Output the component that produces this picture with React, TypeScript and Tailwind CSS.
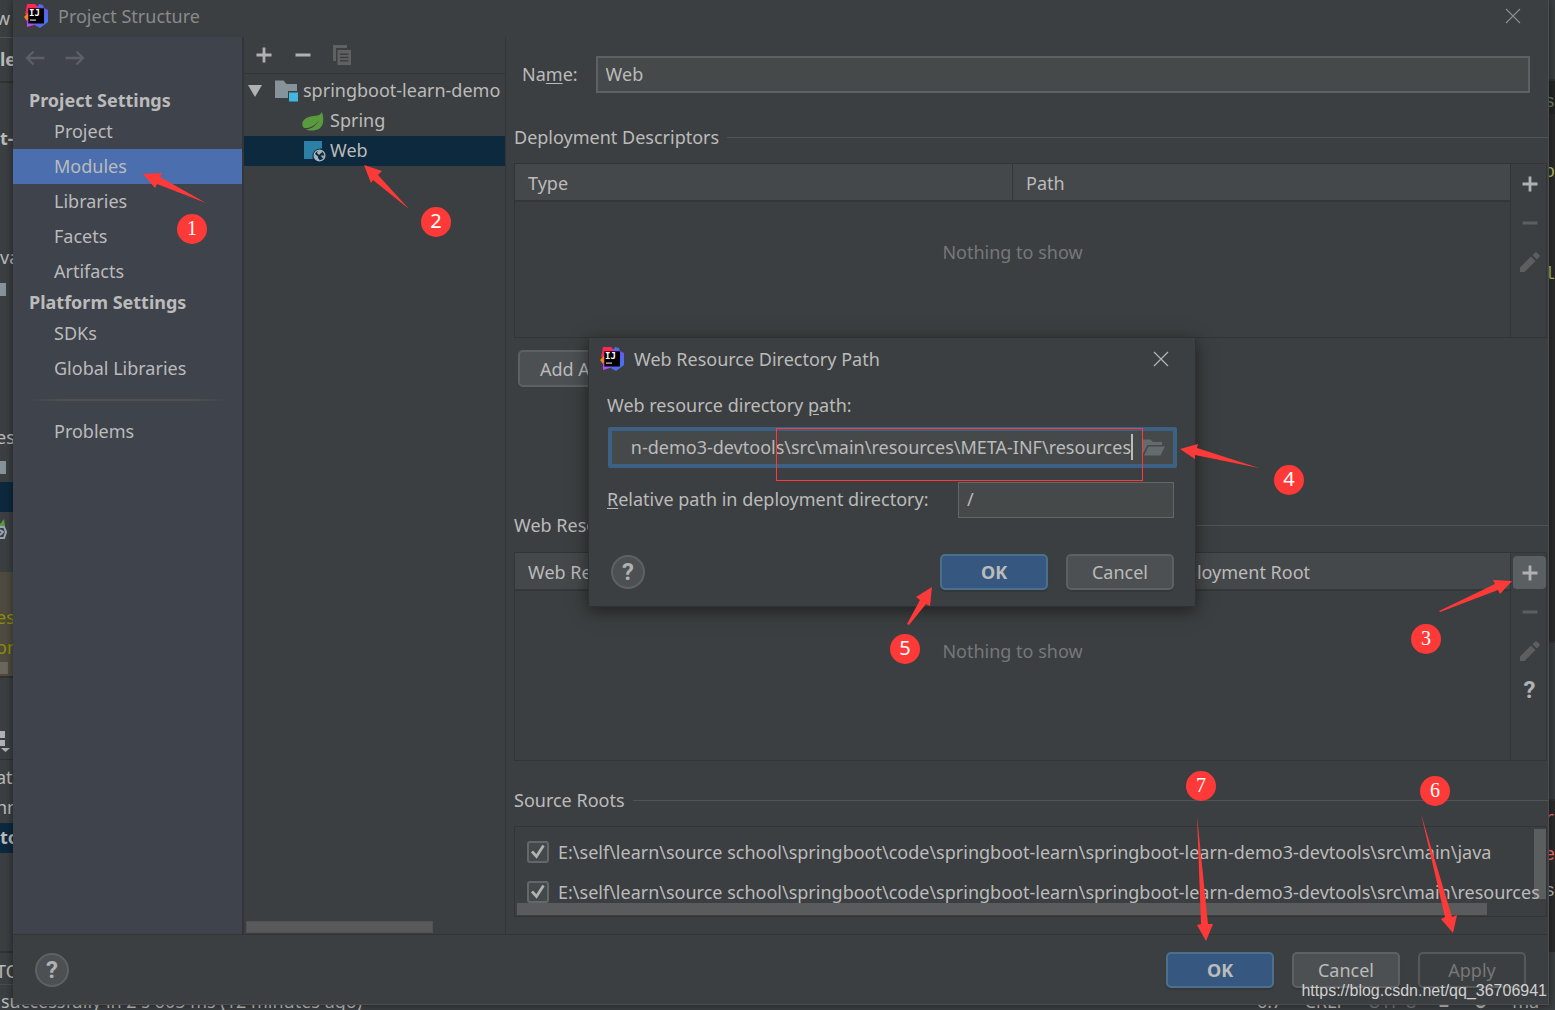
import { useId, useState } from 'react';
import type { ReactNode } from 'react';
import clsx from 'clsx';

const projectItems = ['Project', 'Modules', 'Libraries', 'Facets', 'Artifacts'];
const platformItems = ['SDKs', 'Global Libraries'];

const rootBase = 'E:\\self\\learn\\source school\\springboot\\code\\springboot-learn\\springboot-learn-demo3-devtools\\src\\main\\';

const steps = [
  { n: 1, serif: true, pos: 'left-[177px] top-[214px]' },
  { n: 2, serif: false, pos: 'left-[421px] top-[207px]' },
  { n: 3, serif: true, pos: 'left-[1411px] top-[624px]' },
  { n: 4, serif: false, pos: 'left-[1274px] top-[465px]' },
  { n: 5, serif: false, pos: 'left-[890px] top-[634px]' },
  { n: 6, serif: true, pos: 'left-[1420px] top-[776px]' },
  { n: 7, serif: true, pos: 'left-[1186px] top-[771px]' },
];

const arrows = [
  '143,174 162,173 160,177 206,203 157,184 155,188',
  '364,165 382,171 378,175 409,209 373,180 371,183',
  '1512,581 1493,580 1495,584 1439,611 1440,612 1498,590 1500,594',
  '1180,449 1198,444 1197,448 1259,468 1195,455 1195,459',
  '932,587 916,597 920,600 907,624 909,625 926,604 930,606',
  '1453,933 1441,919 1445,917 1421,814 1452,917 1457,915',
  '1206,941 1197,925 1201,924 1197,816 1208,924 1213,924',
];

function IdeaLogo() {
  const id = useId();
  return (
    <svg viewBox="0 0 24 24" className="size-6 shrink-0" aria-hidden="true">
      <defs>
        <linearGradient id={id} x1="0" y1="0" x2="1" y2="1">
          <stop offset="0" stopColor="#3a7cf0" />
          <stop offset="0.5" stopColor="#6b57e8" />
          <stop offset="1" stopColor="#2787f5" />
        </linearGradient>
      </defs>
      <path d="M3 0 H11 L15 4 L8 14 L1 10 L2 6Z" fill="#fe2857" />
      <path d="M0 13 L4 9 L7 14 L3 17Z" fill="#fc801d" />
      <path d="M3 16 L8 12 L13 20 L3 23Z" fill="#b74af7" />
      <path d="M15 0 L19 1 L20 4 L24 6 V18 L16 24 L9 20 L13 4Z" fill={`url(#${id})`} />
      <rect x="4.300" y="4.300" width="15.700" height="15.200" fill="#000" />
      <text x="5" y="12" fill="#fff" fontSize="9" fontWeight="700" fontFamily="DejaVu Sans Mono, monospace">IJ</text>
      <rect x="6" y="15.500" width="6" height="1.200" fill="#ccc" />
    </svg>
  );
}

function CloseIcon() {
  return (
    <svg viewBox="0 0 16 16" className="size-4" fill="none" stroke="currentColor" strokeWidth="1.3">
      <path d="M1 1 L15 15 M15 1 L1 15" />
    </svg>
  );
}

function PlusIcon() {
  return (
    <svg viewBox="0 0 16 16" className="size-4" fill="currentColor">
      <path d="M6.6 0.5h2.8v6.1h6.1v2.8H9.4v6.1H6.6V9.4H0.5V6.6h6.1z" />
    </svg>
  );
}

function MinusIcon() {
  return (
    <svg viewBox="0 0 16 16" className="size-4" fill="currentColor">
      <rect x="0.5" y="6.5" width="15" height="3" />
    </svg>
  );
}

function PencilIcon() {
  return (
    <svg viewBox="0 0 20 20" className="size-5" fill="currentColor">
      <path d="M0 15.5 L11 4.5 L15.5 9 L4.5 20 H0Z M12.5 3.3 L15.3 0.5 Q16 0 16.7 0.5 L19.5 3.3 Q20 4 19.5 4.7 L16.8 7.5Z" />
    </svg>
  );
}

function CopyIcon() {
  return (
    <svg viewBox="0 0 20 20" className="size-5" fill="#5f6162">
      <path d="M1 0H15V3H4V16H1Z" />
      <path fillRule="evenodd" d="M5.5 5H19V20H5.5Z M8 8.5V10H16.5V8.5Z M8 11.7V13.2H16.5V11.7Z M8 15V16.5H16.5V15Z" />
    </svg>
  );
}

function ArrowIcon({ flip }: { flip?: boolean }) {
  return (
    <svg viewBox="0 0 20 16" className={clsx('w-5 h-4', flip && 'rotate-180')} fill="none" stroke="#5c5f63" strokeWidth="2.4">
      <path d="M1.5 8H19.5 M8.5 1.5 L2 8 L8.5 14.5" />
    </svg>
  );
}

function ModuleIcon() {
  return (
    <svg viewBox="0 0 24 22" className="w-6 h-[22px] shrink-0">
      <path d="M0 0.5H8.5L11.5 4H22V11H13V18H0Z" fill="#87939a" />
      <rect x="14" y="12.5" width="9" height="9" fill="#40b6e0" />
    </svg>
  );
}

function SpringIcon() {
  return (
    <svg viewBox="0 0 22 20" className="w-[22px] h-5 shrink-0">
      <path d="M20 1 C17.5 5.5 13 4.5 8.500 5.500 C2.500 7 -0.500 10.500 0.500 14.500 C1 16 1.500 16.500 2.300 17 C8 17.500 13.500 14.500 17 9 C14.500 14.500 9.500 18 4 18.500 C7 20 13.500 20 17.500 17.500 C22 14 22 7 20 1Z" fill="#5a9a3f" />
    </svg>
  );
}

function WebIcon() {
  return (
    <svg viewBox="0 0 22 22" className="size-[22px] shrink-0">
      <path d="M0 1H18V8.500C13 8 8.500 11 8.500 16C8.500 17.200 8.700 18.200 9 19H0Z" fill="#2c7fa5" />
      <circle cx="15.500" cy="15.500" r="5.400" fill="none" stroke="#a9b3ba" strokeWidth="1.300" />
      <path d="M10.500 13.500 L14 16.500 L14 18 L16 20.500 L14.500 21 L11 18.500Z M14 10.500 L17 10.500 L18.500 12 L16.500 13.500 L15 15 L13 13Z M17 15.500 L20 15.500 L19.500 18.500 L17.500 17Z" fill="#a9b3ba" />
    </svg>
  );
}

function FolderOpenIcon() {
  return (
    <svg viewBox="0 0 22 17" className="w-[22px] h-[17px]" fill="#646b6f">
      <path d="M0 0.500H7.500L10 3H19V6H4.500L0 14.500Z" />
      <path d="M5.500 7.500H22L17.500 16.500H1Z" />
    </svg>
  );
}

interface ButtonProps {
  children: ReactNode;
  kind?: 'primary' | 'disabled';
}

function DialogButton({ children, kind }: ButtonProps) {
  return (
    <button
      disabled={kind === 'disabled'}
      className={clsx(
        'w-[108px] h-9 rounded-[5px] border-2 shadow-[0_2px_1px_#35383a]',
        kind === 'primary' && 'bg-[#365880] border-[#4c708c] font-bold',
        kind === 'disabled' && 'border-[#56595a] text-[#777777]',
        !kind && 'bg-[#4c5052] border-[#5e6162]',
      )}
    >
      {children}
    </button>
  );
}

function HelpButton() {
  return (
    <button aria-label="Help" className="size-[34px] rounded-full border-2 border-[#5e6162] bg-[#4c5052] flex items-center justify-center font-['Roboto',sans-serif] text-2xl font-bold text-[#afb1b3]">
      ?
    </button>
  );
}

function SectionTitle({ children }: { children: ReactNode }) {
  return (
    <div className="flex items-center gap-2 h-6 pl-2">
      <h2>{children}</h2>
      <div className="flex-1 border-t border-[#515456]" />
    </div>
  );
}

interface TableProps {
  columns: string[];
  help?: boolean;
  active?: boolean;
  height: string;
  emptyPad: string;
}

function RootsTable({ columns, help, active, height, emptyPad }: TableProps) {
  return (
    <div className={clsx('ml-2 mr-px flex border border-[#323436]', height)}>
      <table className="flex-1 self-start border-collapse table-fixed">
        <thead>
          <tr className="h-[37px] bg-[#45484a] border-b-2 border-[#343638]">
            {columns.map((c) => (
              <th key={c} className="w-1/2 pl-[13px] pt-px text-left font-normal border-l border-[#343638] first:border-l-0">{c}</th>
            ))}
          </tr>
        </thead>
        <tbody>
          <tr>
            <td colSpan={2} className={clsx('text-center text-[#75787a]', emptyPad)}>Nothing to show</td>
          </tr>
        </tbody>
      </table>
      <div className="w-9 border-l border-[#323436] flex flex-col items-end gap-[6px] pt-[3px] text-[#5c5e60]">
        <button aria-label="Add" className={clsx('size-[33px] flex items-center justify-center rounded text-[#afb1b3]', active && 'bg-[#5a5f62]')}><PlusIcon /></button>
        <button aria-label="Remove" className="size-[33px] flex items-center justify-center"><MinusIcon /></button>
        <button aria-label="Edit" className="size-[33px] flex items-center justify-center"><PencilIcon /></button>
        {help && <button aria-label="Help" className="size-[33px] font-['Roboto',sans-serif] text-2xl font-bold text-[#afb1b3]">?</button>}
      </div>
    </div>
  );
}

function SourceRoot({ path }: { path: string }) {
  const [checked, setChecked] = useState(true);
  return (
    <label className="flex items-center gap-[9px] h-10 pl-3 whitespace-nowrap">
      <span className="relative size-[22px] shrink-0">
        <input
          type="checkbox"
          checked={checked}
          onChange={(e) => setChecked(e.target.checked)}
          className="appearance-none block size-[22px] rounded-[3px] border-2 border-[#646768] bg-[#43494a]"
        />
        {checked && (
          <svg viewBox="0 0 22 22" className="absolute inset-0 pointer-events-none" fill="none" stroke="#afb1b3" strokeWidth="2.800">
            <path d="M5 10.500 L9.500 15.500 L16.500 4.500" />
          </svg>
        )}
      </span>
      {path}
    </label>
  );
}

// Parts of the editor window that stick out around the dialog
function Backdrop() {
  return (
    <div className="absolute inset-0 flex flex-col overflow-hidden whitespace-nowrap" aria-hidden="true">
      <div className="flex-1 flex justify-between min-h-0">
        <div className="w-[13px] overflow-hidden">
          <div className="h-[38px] border-b border-[#515456] leading-9 -indent-1">w</div>
          <div className="h-[45px] border-b-2 border-[#323232] leading-[42px] font-bold">le</div>
          <div className="h-[110px] leading-[110px] font-bold">t-</div>
          <div className="h-[90px] pt-[49px] leading-[30px]">va</div>
          <div className="w-[6px] h-[13px] bg-[#87939a]" />
          <div className="h-[126px]" />
          <div className="h-[30px] leading-[30px] -indent-1">eso</div>
          <div className="h-[30px] pt-[9px]"><div className="w-[6px] h-[13px] bg-[#87939a]" /></div>
          <div className="h-[30px] bg-[#0d293e]" />
          <div className="h-[60px] pt-[6px]">
            <svg viewBox="0 0 13 24" className="w-[13px] h-6" fill="none">
              <path d="M0 6 L4 1 L5 8 H0Z" fill="#5a9a3f" />
              <path d="M0 9H4L6 14L4 20H0 M0 12L3 14L0 17" stroke="#9aa7b0" strokeWidth="2" />
            </svg>
          </div>
          <div className="h-[106px] pt-[30px] border-b-2 border-[#323232] bg-[#4f4b41] text-[#8e8d00] leading-[30px]">
            <div className="-indent-1">es</div>
            <div className="-indent-1">on</div>
            <div className="w-2 h-3 bg-[#6a675c]" />
          </div>
          <div className="h-[82px] pt-[53px] border-b border-[#323232]">
            <svg viewBox="0 0 13 22" className="w-[13px] h-[22px]" fill="#afb1b3">
              <path d="M0 0H5V7H0Z M0 9H5V15H0Z M1 17H10L5.500 21Z" />
            </svg>
          </div>
          <div className="h-[63px] pt-[2px] leading-[30px] -indent-1"><div>at</div><div>nn</div></div>
          <div className="h-[30px] leading-[29px] bg-[#0d293e] font-bold">to</div>
          <div className="h-[100px] border-b-2 border-[#323232]" />
          <div className="h-8 leading-9 border-b border-[#4a4d4f] -indent-1">TO</div>
        </div>
        <div className="w-3 overflow-hidden text-right font-['Liberation_Mono',monospace]">
          <div className="h-[81px] border-b-2 border-[#323232]" />
          <div className="h-[33px] bg-[#232525] leading-[42px] text-[#6a8759]">s</div>
          <div className="h-[527px] bg-[#2b2b2b] text-[#a5c25c]">
            <div className="pt-[46px]">o</div>
            <div className="pt-[78px]">l</div>
          </div>
          <div className="h-[160px] border-y-2 border-[#323232] bg-[#393c3e]" />
          <div className="h-[151px] bg-[#2b2b2b] leading-9 text-[#ff6b68]">
            <div>r</div><div>e</div><div className="text-[#bbbbbb]">s</div>
          </div>
        </div>
      </div>
      <div className="h-[19px] pl-px pr-2 flex items-center justify-between">
        <span>successfully in 2 s 605 ms (12 minutes ago)</span>
        <span className="flex gap-[22px] w-[290px]">
          <span>6:7</span><span>CRLF</span><span className="text-[#777777]">UTF-8</span><span>■</span><span>☻</span><span>ma</span>
        </span>
      </div>
    </div>
  );
}

function Sidebar() {
  const [selected, setSelected] = useState('Modules');
  const item = (name: string) => (
    <button
      key={name}
      onClick={() => setSelected(name)}
      className={clsx('h-[35px] pl-[41px] pb-px text-left', selected === name && 'bg-[#4b6eaf]')}
    >
      {name}
    </button>
  );
  return (
    <nav className="w-[231px] shrink-0 flex flex-col bg-[#3f434c] border-r-2 border-[#343536]">
      <div className="h-[42px] flex items-center gap-5 pl-3">
        <button aria-label="Back"><ArrowIcon /></button>
        <button aria-label="Forward"><ArrowIcon flip /></button>
      </div>
      <h2 className="mt-2 h-[27px] leading-[27px] pl-4 font-bold">Project Settings</h2>
      {projectItems.map(item)}
      <h2 className="h-[27px] leading-[27px] pl-4 font-bold">Platform Settings</h2>
      {platformItems.map(item)}
      <div className="h-[2px] my-[13px] mx-3 bg-[linear-gradient(90deg,transparent,#515151_20%,#515151_80%,transparent)]" />
      {item('Problems')}
    </nav>
  );
}

function ModuleTree() {
  return (
    <section className="w-[262px] shrink-0 flex flex-col border-r border-[#323436]">
      <div className="h-[37px] flex items-center gap-[23px] pl-3 border-b border-[#323436] text-[#afb1b3]">
        <button aria-label="Add"><PlusIcon /></button>
        <button aria-label="Remove"><MinusIcon /></button>
        <button aria-label="Copy" className="-ml-[2px]"><CopyIcon /></button>
      </div>
      <ul className="pt-[2px] overflow-hidden whitespace-nowrap flex-1">
        <li className="h-[30px] flex items-center pl-1">
          <svg viewBox="0 0 14 12" className="w-[14px] h-3 shrink-0 mr-[13px]" fill="#afb1b3"><path d="M0 0H14L7 12Z" /></svg>
          <ModuleIcon />
          <span className="ml-1 pb-[2px]">springboot-learn-demo</span>
        </li>
        <li className="h-[30px] flex items-center gap-[6px] pl-[58px]"><SpringIcon /><span className="pb-[2px]">Spring</span></li>
        <li className="h-[30px] flex items-center gap-1 pl-[60px] bg-[#0d293e]"><WebIcon /><span className="pb-[2px]">Web</span></li>
      </ul>
      <div className="w-[187px] h-3 ml-[2px] mb-px bg-[#58595b] border border-[#505254]" />
    </section>
  );
}

function PathDialog() {
  return (
    <div role="dialog" aria-label="Web Resource Directory Path" className="absolute left-[588px] top-[337px] w-[608px] border border-[#2f3133] bg-[#3c3f41] shadow-[0_4px_16px_rgba(0,0,0,0.5)]">
      <div className="h-[44px] flex items-center pl-[11px] pr-[26px] pb-[2px]">
        <IdeaLogo />
        <h2 className="ml-[10px] flex-1">Web Resource Directory Path</h2>
        <button aria-label="Close" className="text-[#afb1b3]"><CloseIcon /></button>
      </div>
      <div className="px-[18px]">
        <label htmlFor="path" className="block h-[45px] leading-[46px]">Web resource directory <u className="underline-offset-2">p</u>ath:</label>
        <div className="h-[41px] ml-px flex items-center border-4 border-[#3d6185] bg-[#45494a] rounded-[2px] pl-[6px] pr-2">
          <input id="path" className="flex-1 min-w-0 pb-[2px] text-right outline-none" defaultValue={'n-demo3-devtools\\src\\main\\resources\\META-INF\\resources'} />
          <span className="w-[2px] h-[26px] mr-[10px] mb-[2px] bg-[#bbbbbb]" />
          <button aria-label="Browse"><FolderOpenIcon /></button>
        </div>
        <div className="mt-[14px] mr-[3px] flex items-center">
          <label htmlFor="relative" className="pb-[2px]"><u className="underline-offset-2">R</u>elative path in deployment directory:</label>
          <input id="relative" className="ml-auto w-[216px] h-9 px-2 pb-[2px] border border-[#646768] bg-[#45494a] outline-none" defaultValue="/" />
        </div>
        <div className="mt-9 mb-4 ml-1 mr-[3px] flex items-center gap-[18px]">
          <HelpButton />
          <span className="flex-1" />
          <DialogButton kind="primary">OK</DialogButton>
          <DialogButton>Cancel</DialogButton>
        </div>
      </div>
    </div>
  );
}

export default function App() {
  return (
    <div className="relative h-screen overflow-hidden bg-[#3c3f41] text-[#bbbbbb] text-[18px] leading-6 font-['Noto_Sans','Open_Sans',sans-serif]">
      <Backdrop />
      <main className="relative h-full pl-[13px] pr-[6px] pb-[5px] flex flex-col">
        <div className="flex-1 min-h-0 flex flex-col bg-[#3c3f41] border-r border-b border-[#4b4e50] shadow-[0_0_8px_rgba(0,0,0,0.5)]">
          <header className="h-[37px] shrink-0 flex items-center pl-[11px] pr-[27px] pb-[5px] text-[#888a8b]">
            <IdeaLogo />
            <h1 className="ml-[10px] flex-1">Project Structure</h1>
            <button aria-label="Close"><CloseIcon /></button>
          </header>
          <div className="flex-1 min-h-0 flex">
            <Sidebar />
            <ModuleTree />
            <section className="flex-1 min-w-0 overflow-hidden">
              <div className="mt-[19px] flex items-center pl-4 pr-[18px] gap-[18px]">
                <label htmlFor="name" className="pb-[2px]">Na<u className="underline-offset-2">m</u>e:</label>
                <input id="name" className="flex-1 h-[37px] px-2 pb-[2px] border-2 border-[#5e6162] bg-[#45494a] outline-none" defaultValue="Web" />
              </div>
              <div className="mt-8"><SectionTitle>Deployment Descriptors</SectionTitle></div>
              <div className="mt-[14px]">
                <RootsTable columns={['Type', 'Path']} height="h-[175px]" emptyPad="pt-[38px]" />
              </div>
              <button className="mt-3 ml-3 h-[37px] px-5 rounded-[5px] border-2 border-[#5e6162] bg-[#4c5052]">Add Application Server specific descriptor...</button>
              <div className="mt-[126px]"><SectionTitle>Web Resource Directories</SectionTitle></div>
              <div className="mt-[15px]">
                <RootsTable columns={['Web Resource Directory', 'Path Relative to Deployment Root']} active help height="h-[209px]" emptyPad="pt-12" />
              </div>
              <div className="mt-[27px]"><SectionTitle>Source Roots</SectionTitle></div>
              <div className="relative mt-[14px] ml-2 mr-px h-[91px] pt-[5px] overflow-hidden border border-[#323436]">
                <SourceRoot path={rootBase + 'java'} />
                <SourceRoot path={rootBase + 'resources'} />
                <div className="absolute left-[2px] right-[59px] bottom-px h-3 bg-[#5a5b5d]" />
                <div className="absolute right-0 top-[2px] w-3 h-[70px] bg-[#a6a6a6]/30" />
              </div>
            </section>
          </div>
          <footer className="h-[70px] shrink-0 flex items-center gap-[18px] px-[22px] pt-px border-t border-[#323436]">
            <HelpButton />
            <span className="flex-1" />
            <DialogButton kind="primary">OK</DialogButton>
            <DialogButton>Cancel</DialogButton>
            <DialogButton kind="disabled">Apply</DialogButton>
          </footer>
        </div>
      </main>
      <PathDialog />
      <svg className="absolute inset-0 size-full pointer-events-none" fill="#fe3a38">
        {arrows.map((p) => <polygon key={p} points={p} />)}
      </svg>
      <div className="absolute left-[776px] top-[428px] w-[367px] h-[53px] border border-[#fe3a38] pointer-events-none" />
      {steps.map((s) => (
        <span
          key={s.n}
          className={clsx(
            'absolute size-[30px] rounded-full bg-[#fe3a38] text-white text-xl leading-[28px] text-center',
            s.pos,
            s.serif && "font-['Liberation_Serif',serif]",
          )}
        >
          {s.n}
        </span>
      ))}
      <a href="https://blog.csdn.net/qq_36706941" className="absolute right-2 bottom-2 text-base leading-[22px] text-[#d0d0d0] font-['Liberation_Sans',sans-serif]">
        https://blog.csdn.net/qq_36706941
      </a>
    </div>
  );
}
